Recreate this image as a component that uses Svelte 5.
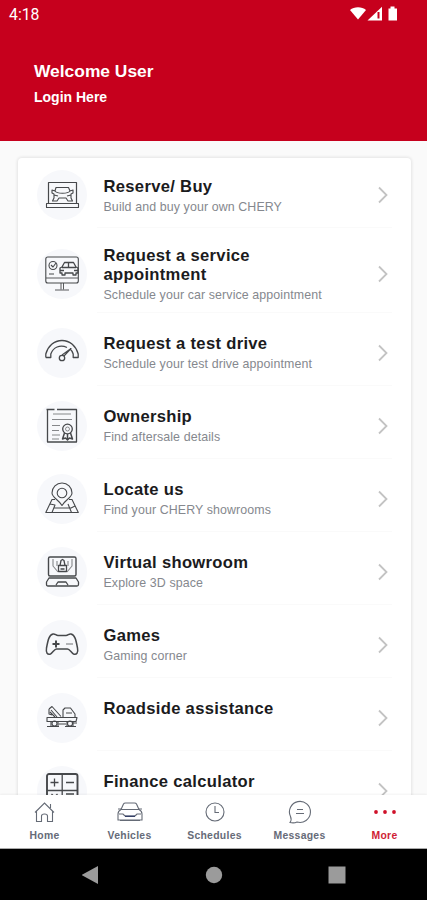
<script>
	const items = [
		{ icon: 'reserve', title: 'Reserve/ Buy', text: 'Build and buy your own CHERY' },
		{ icon: 'service', title: 'Request a service appointment', text: 'Schedule your car service appointment', tall: true },
		{ icon: 'drive', title: 'Request a test drive', text: 'Schedule your test drive appointment' },
		{ icon: 'ownership', title: 'Ownership', text: 'Find aftersale details' },
		{ icon: 'locate', title: 'Locate us', text: 'Find your CHERY showrooms' },
		{ icon: 'virtual', title: 'Virtual showroom', text: 'Explore 3D space' },
		{ icon: 'games', title: 'Games', text: 'Gaming corner' },
		{ icon: 'roadside', title: 'Roadside assistance', text: '' },
		{ icon: 'finance', title: 'Finance calculator', text: '' }
	];

	const tabs = ['Home', 'Vehicles', 'Schedules', 'Messages', 'More'];
	let active = $state('More');
</script>

<div class="screen">
	<header>
		<div class="status">
			<span>4:18</span>
			<svg width="50" height="16" viewBox="0 0 50 16" fill="#fff">
				<path d="M1 4C5 .2 13 .2 17 4L9 13.500z" />
				<path d="M33 .8V14.500H18.500z" />
				<path d="M28.500 6h2v6.500h-2z" fill="#c6001d" />
				<path d="M39.500 2.500h2V.500h4v2h2.500V14.500h-8.500z" />
			</svg>
		</div>
		<h1>Welcome User</h1>
		<a href="#login">Login Here</a>
	</header>

	<main>
		<div class="card">
			{#each items as item}
				<div class="row" class:tall={item.tall}>
					<div class="circle">
						<svg width="34" height="34" viewBox="0 0 34 34">
							{#if item.icon === 'reserve'}
								<path d="M3.500 25V4.500h28V25" stroke-width="1.200" />
								<path d="M1.500 25.500h32v4h-32z" />
								<path d="M11 9.500h12.500L25 13l3-1v3l-2 1v4l1.500 3H23l-2-3h-7l-2 3H7.500L9 20v-4l-2-1v-3l3 1zM10 13c2 3 13 3 15 0M9 17l4 1M26 17l-4 1" />
							{:else if item.icon === 'service'}
								<rect x=".8" y="0" width="32.500" height="26" rx="2" />
								<path d="M1 21h32M16 26v6.500M18.500 26v6.500M10 33h14" stroke-width=".9" />
								<circle cx="8" cy="8.500" r="4" />
								<path d="M6 8l2 2 3-4M4 17h5" />
								<path d="M15 16v-5l2-1 2.500-4.500h9l2.500 4.500 2 1v5h-2v2h-3v-2h-8v2h-3v-2zM17 10.500h14M23.500 6v4M15 13.500h4M29 13.500h4" stroke-width="1.300" />
							{:else if item.icon === 'drive'}
								<path d="M.8 21.500V18C3 10 9 4.500 17 4.500S31 10 33.200 18v3.500h-5V18c-.7-2-1.700-4-3.200-5M22 11.500C15 8 8 11.500 5.800 18v3.500h-5" stroke-width="1.300" />
								<path d="M19 20l7-7.500-9 6.500" />
								<circle cx="17" cy="22" r="2.700" stroke-width="1.300" />
							{:else if item.icon === 'ownership'}
								<path d="M2.500 .5v32.500h29V.5H12M1.500 .5h8" stroke-width="1.300" />
								<path d="M8 5h18M7 10.500h20M7 16.500h8M7 21.500h7M7 26h8M7 30h7" stroke="#85878a" />
								<circle cx="22.500" cy="20" r="4.800" stroke-width="1.300" />
								<circle cx="22.500" cy="20" r="2" stroke-width=".6" />
								<path d="M19.500 24l-2 6 3-1 2 2 2-2 3 1-2-6M22.500 25v6" stroke-width="1.500" />
							{:else if item.icon === 'locate'}
								<path d="M17 23.500C14 18 7 15.500 7 11a10 10 0 0 1 20 0C27 15.500 20 18 17 23.500z" />
								<circle cx="17" cy="11" r="4.800" />
								<path d="M10 17.500H7L.8 30.500h32.500L27 17.500h-3M5 22l5 1-3 7.500M23 22l3.500 8.500M9 26h17l4-2" />
							{:else if item.icon === 'virtual'}
								<rect x="3.500" y="2" width="27.500" height="19" rx="1.500" stroke-width="1.400" />
								<path d="M4 23h27l2.500 4v2.500q0 1.500-1.500 1.500H3q-1.500 0-1.500-1.500V27zM11 30l2-3h8l2 3" stroke-width="1.300" />
								<path d="M8 4v7l5 6M27 4v7l-5 6M12 6v5M23 6v5" stroke="#85878a" />
								<path d="M13.500 10.500h8v6h-8zM15 10.500l1-5 1.500-1 1.500 1 1 5M15.500 14h4" stroke-width="1.300" />
							{:else if item.icon === 'games'}
								<path d="M8 6C4 7 3 12 1.500 20c-.8 5 1 7 4 6 2-1 4-5 6-5h11c2 0 4 4 6 5 3 1 5-1 4-6C31 12 30 7 26 6c-2-.5-3 1.500-5 1.500h-8C11 7.500 10 5.500 8 6z" stroke-width="1.500" />
								<path d="M11 12.500v7M7.500 16h7" stroke-width="2" />
								<path d="M21 16h7" stroke="#7c7e81" />
							{:else if item.icon === 'roadside'}
								<path d="M2 16.500h30l-1 4H2zM18 16V9l2-2h5.500l4.500 6v3M21 12h6M13.500 23H21M28 22h4" />
								<path d="M4 8l3-2.500 9 10M6 9l6 7M4 8v5l3 1M5 11l5 5" />
								<circle cx="9.500" cy="22.500" r="2.500" />
								<circle cx="25" cy="22.500" r="2.500" />
								<path d="M2 25.500h12M20 25.500h11M6 20v5M13 20v5M22 20v5M28 20v5" />
							{:else}
								<rect x="2" y="0" width="30.500" height="32" rx="2" stroke-width="1.900" />
								<path d="M17.200 0v31M2 16.500h30M9.500 4.500v8M5.500 8.500h8M21 8.500h8M6.500 20l6 6M12.500 20l-6 6M21 20h8" stroke-width="1.300" />
							{/if}
						</svg>
					</div>
					<div class="label">
						<h2>{item.title}</h2>
						<p>{item.text}</p>
					</div>
					<svg class="chevron" width="10" height="18" viewBox="0 0 10 18"><path d="M1 1.500l7.500 7.500L1 16.500" /></svg>
				</div>
			{/each}
		</div>
	</main>

	<nav>
		{#each tabs as tab}
			<button class:active={active === tab} onclick={() => (active = tab)}>
				<svg width="28" height="26" viewBox="0 0 28 26">
					{#if tab === 'Home'}
						<path d="M5.500 12.500v10h5V17q0-2 3-2t3 2v5.500h5v-10M4 13.500L13.500 4l9.500 9.500M19.500 5v4" />
					{:else if tab === 'Vehicles'}
						<path d="M5 10.500l2.500-5.500q.5-1 2-1h9q1.500 0 2 1l2.500 5.500Q26 12 26 15v6H2v-6q0-3 3-4.500zM5 10.500h18M3 15h4l2 2M25 15h-4l-2 2M4 21.500h20" />
						<path d="M9 17.200h10" stroke="#354066" stroke-width="1.600" />
						<path d="M2 10h3M23 10h3" />
					{:else if tab === 'Schedules'}
						<circle cx="14" cy="13" r="9" />
						<path d="M14 7v6.500h4" />
					{:else if tab === 'Messages'}
						<path d="M4.500 17.500A10.500 10.500 0 1 1 11 23q-3 1.500-7 .5 2-2.500.5-6zM11 10.500h6M10 14.500h8" />
					{:else}
						<g class="dots"><circle cx="5" cy="13" r="1.900" /><circle cx="14" cy="13" r="1.900" /><circle cx="23" cy="13" r="1.900" /></g>
					{/if}
				</svg>
				<span>{tab}</span>
			</button>
		{/each}
	</nav>

	<div class="system">
		<svg width="18" height="20" viewBox="0 0 18 20"><path d="M16 1v18L-.5 10z" /></svg>
		<svg width="18" height="20" viewBox="0 0 18 20"><circle cx="9" cy="10" r="8.200" /></svg>
		<svg width="18" height="20" viewBox="0 0 18 20"><path d="M.5 1.500h17v17H.5z" /></svg>
	</div>
</div>

<style>
	:global(body) {
		margin: 0;
	}
	.screen {
		display: flex;
		flex-direction: column;
		width: 427px;
		height: 900px;
		overflow: hidden;
		background: #fafafa;
		font-family: 'Liberation Sans', Arial, sans-serif;
	}
	header {
		flex: none;
		box-sizing: border-box;
		height: 141px;
		background: #c6001d;
		color: #fff;
	}
	.status {
		display: flex;
		justify-content: space-between;
		align-items: center;
		height: 28px;
		margin-bottom: 32px;
		padding: 0 28px 0 9px;
		font: 400 15.8px Roboto, sans-serif;
	}
	h1 {
		margin: 0 0 6px 34px;
		font-size: 17.4px;
		line-height: 22px;
	}
	header a {
		display: block;
		margin-left: 34px;
		color: #fff;
		font-size: 14px;
		font-weight: bold;
		line-height: 18px;
		text-decoration: none;
	}
	main {
		flex: 1;
		min-height: 0;
		overflow: hidden;
		padding: 17px 16px 0 18px;
	}
	.card {
		background: #fff;
		border-radius: 4px;
		box-shadow: 0 0 3px 1px rgba(0, 0, 0, 0.09);
	}
	.row {
		display: flex;
		align-items: center;
		box-sizing: border-box;
		height: 73px;
		padding: 15px 23px 8px 19px;
		background: linear-gradient(#fafafa, #fafafa) 79px 100% / 295px 1px no-repeat;
	}
	.row:first-child {
		height: 70px;
		padding-top: 12px;
	}
	.row.tall {
		height: 85px;
	}
	.circle {
		display: flex;
		flex: none;
		align-items: center;
		justify-content: center;
		width: 50px;
		height: 50px;
		border-radius: 50%;
		background: #f7f8fb;
	}
	.circle svg {
		overflow: visible;
		fill: none;
		stroke: #46484b;
		stroke-width: 1.1;
		stroke-linejoin: round;
	}
	.label {
		flex: 1;
		padding-left: 16.5px;
	}
	.row:first-child .label,
	.tall .label {
		padding-top: 1px;
	}
	h2 {
		max-width: 190px;
		margin: 0;
		color: #1b1b1d;
		font-size: 16.6px;
		line-height: 19px;
		letter-spacing: 0.31px;
	}
	p {
		height: 15px;
		margin: 4px 0 0;
		color: #85888e;
		font-size: 12.4px;
		line-height: 15px;
		letter-spacing: 0.11px;
		white-space: nowrap;
	}
	.chevron {
		flex: none;
		fill: none;
		stroke: #c3c3c3;
		stroke-width: 1.8;
	}
	nav {
		display: grid;
		grid-template-columns: repeat(5, 1fr);
		flex: none;
		box-sizing: border-box;
		height: 54px;
		padding-left: 2px;
		border-bottom: 1px solid #aaa;
		background: #fff;
		box-shadow: 0 -1px 2px rgba(0, 0, 0, 0.05);
	}
	button {
		display: flex;
		flex-direction: column;
		align-items: center;
		padding: 4px 0 0;
		border: 0;
		background: none;
		color: #666b78;
		font: bold 10.4px/14px 'Liberation Sans', Arial, sans-serif;
		letter-spacing: 0.3px;
	}
	button svg {
		margin-bottom: 4px;
		fill: none;
		stroke: #656b76;
		stroke-width: 1.1;
	}
	button.active {
		color: #cf1e35;
	}
	.dots {
		fill: #cf1029;
		stroke: none;
	}
	.system {
		display: flex;
		flex: none;
		align-items: center;
		justify-content: center;
		gap: 105px;
		height: 51px;
		background: #000;
		fill: #9b9b9b;
	}
</style>
